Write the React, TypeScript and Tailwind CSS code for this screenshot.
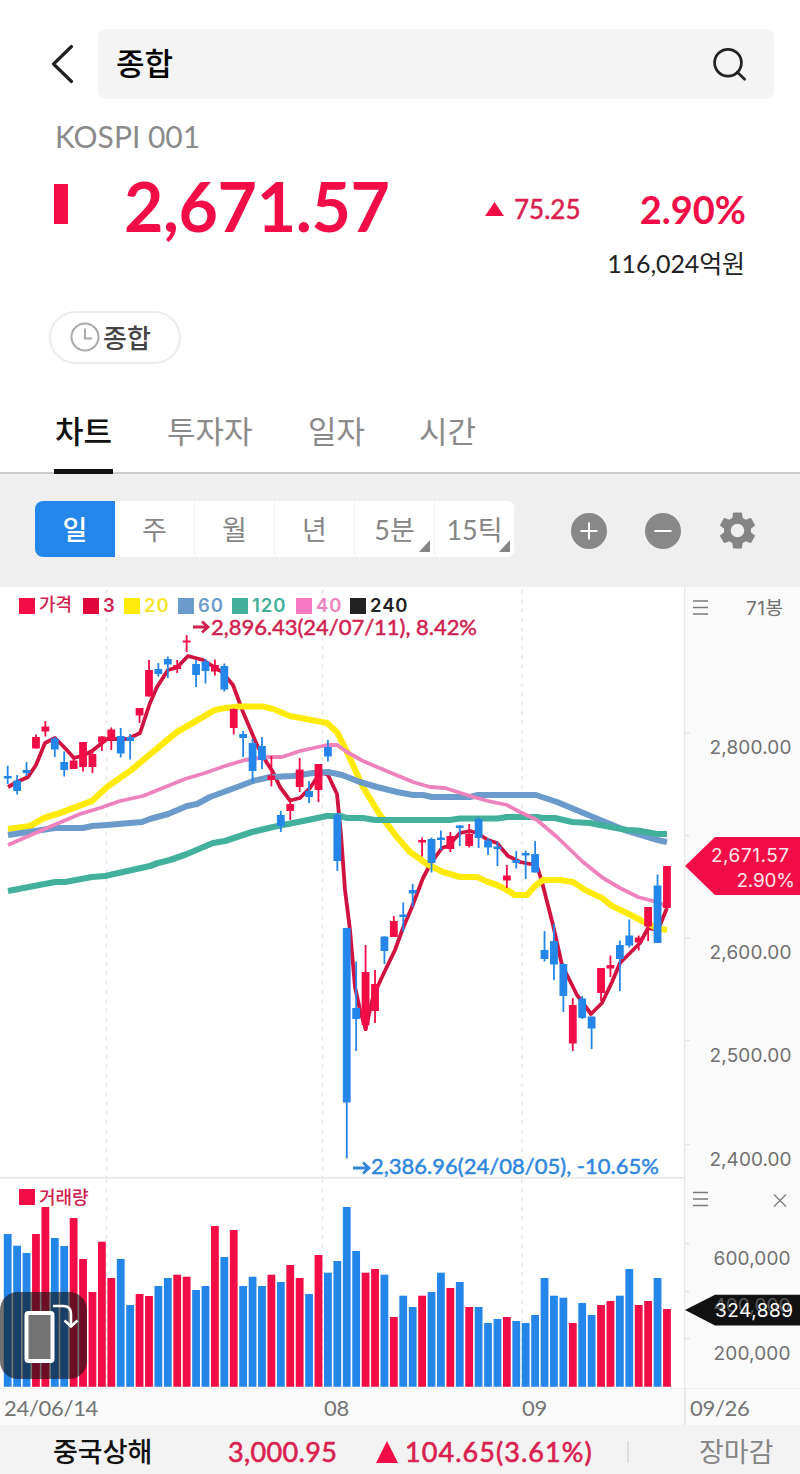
import React from 'react';
import { MdSettings } from 'react-icons/md';

const UP = '#f20d46';
const DOWN = '#2586ea';
const LATO = "Lato, 'Noto Sans CJK KR', sans-serif";
const INTER = "Inter, 'Noto Sans CJK KR', sans-serif";

// [direction, high, body top, body bottom, low, volume top]
type Bar = [number, number, number, number, number, number];

const bars: Bar[] = [
  [0, 765.7, 776, 778.5, 784, 1234],
  [0, 775, 780.5, 791, 794.5, 1245.7],
  [0, 762, 770, 773, 776, 1253],
  [1, 734.5, 737, 748.5, 748.5, 1234],
  [1, 721, 726.5, 731.5, 736.5, 1207],
  [0, 737, 738.5, 749.5, 757, 1238],
  [0, 751.5, 762, 770, 776.5, 1246],
  [1, 757, 760.5, 769, 769, 1218],
  [1, 742, 742, 767, 771.5, 1259],
  [1, 750, 754, 767, 773, 1292],
  [1, 736, 736.5, 742.5, 751, 1241.7],
  [1, 727.5, 729.5, 740, 750, 1278],
  [0, 728, 736, 753.5, 757.5, 1259],
  [0, 734, 737, 741, 759.5, 1305],
  [1, 708, 708, 715.5, 723, 1294],
  [1, 660, 670, 696.5, 696.5, 1296],
  [0, 663, 669, 674, 676.5, 1286],
  [0, 656.5, 659, 664.5, 678, 1278],
  [1, 660, 665, 669, 673, 1274.7],
  [1, 635, 640.5, 642.5, 652, 1276.7],
  [0, 660, 664, 675, 687, 1290],
  [0, 659, 661.5, 671, 683.5, 1286],
  [1, 659.5, 665, 671.5, 675.5, 1226],
  [0, 663.5, 666, 689.5, 691.5, 1257],
  [1, 708.5, 709, 728, 734.5, 1230],
  [0, 731, 734, 738, 757, 1286],
  [0, 739, 743, 771, 782, 1276.7],
  [0, 737, 746, 760, 769, 1286],
  [1, 756, 775.5, 780, 786.5, 1274.7],
  [0, 811, 815, 826, 832, 1282],
  [1, 801.5, 804, 811, 820, 1265],
  [1, 758, 769.5, 787, 792, 1278],
  [0, 781, 791, 797, 803, 1294],
  [1, 764, 764, 790, 802, 1255],
  [0, 740, 747, 756.5, 761.5, 1272.7],
  [0, 813, 815, 861, 871, 1261],
  [0, 928, 928, 1102.5, 1158.5, 1207],
  [0, 961.5, 1008, 1019, 1051, 1251],
  [1, 945, 972, 1025, 1031, 1272.7],
  [1, 970, 984, 1011, 1023, 1269],
  [0, 936.5, 936.5, 951, 964, 1274.7],
  [1, 916, 921, 937, 937, 1317],
  [0, 902.5, 914.5, 917, 931.5, 1295.7],
  [0, 884, 890, 893.5, 907, 1307],
  [1, 837.5, 840, 842.5, 856.5, 1295.7],
  [0, 837.5, 839, 863, 872.5, 1292],
  [0, 830.5, 837.5, 840, 850, 1272.7],
  [1, 832, 836, 849, 852, 1288],
  [0, 825, 825.5, 828, 846, 1282],
  [1, 824, 834, 846, 847.5, 1307],
  [0, 817.5, 819, 838, 848, 1307],
  [0, 838, 840.5, 847.5, 855, 1323],
  [0, 842, 846.5, 849, 866, 1319],
  [1, 865, 875.5, 880.5, 888, 1317],
  [0, 851, 860, 863, 868.5, 1321],
  [0, 850.5, 853, 855.5, 879, 1323],
  [0, 841, 854, 872.5, 872.5, 1315],
  [0, 931, 950, 959, 961.5, 1278],
  [0, 924, 941, 964.5, 980, 1295.7],
  [0, 963, 964, 996, 1012, 1297.7],
  [1, 998, 1005, 1043.5, 1051, 1323],
  [0, 996, 998.5, 1018, 1019, 1303],
  [0, 1016.5, 1016.5, 1028.5, 1049, 1315],
  [1, 968, 968, 993, 1001, 1305],
  [1, 955.5, 965, 968.5, 977, 1301],
  [0, 940.5, 945, 959, 991, 1295.7],
  [0, 919.5, 935.5, 945.5, 947.5, 1269],
  [1, 935.5, 937.5, 942.5, 950.5, 1305],
  [1, 907, 907, 926.5, 941, 1301],
  [0, 874.5, 885.5, 943, 943, 1278],
  [1, 866, 866, 908, 908, 1309],
];

const barX = (i: number) => 7.7 + i * 9.418;

const averages = [
  {
    color: '#cf1240',
    width: 3.8,
    points:
      '8,787 17,782 28,777 36,765 45,743 55,738 64,747 74,758 83,755.5 92,751 107,739 128,739 140,733 150,703 157,687 168,670 177,667.5 188,656 203,660 222,672 233,685 243,712 257,745 267,763 273,772 280,787 290,800.5 300,798 310,788 318,776 323,773 328,775 337,794 341,835 345,890 350,930 355,987 360,1010 365.6,1029 373,997 382,977 395,950 403,928 412,907 423,878 431,863 442,848 448,846 460,833 470,831 477,833 488,840 497,843 508,856 520,862 530,864 536,863 542,882 553,925 562,965 577,995 591,1014 602,1003 612,982 620,963 630,953 640,943 648,928 653,929 660,925 667,908',
  },
  {
    color: '#ffea0a',
    width: 6.2,
    points:
      '8,829 30,826 44,818 60,813 92,801 107,787 130,771 177,732 215,710 225,708 240,706.5 263,706.5 273,709 290,716 327,723 337,732 347,752 363,787 380,815 397,837 410,852 427,864 443,872 460,877 477,877 488,882 497,885 507,890 515,895 527,895 535,886 543,880 560,880 573,882 585,890 602,898 612,906 627,913 642,921 655,927 660,929 667,930',
  },
  {
    color: '#6b9bcb',
    width: 6,
    points:
      '8,835 35,831 55,828 83,828 92,826 107,825 130,823 142,822 150,819 168,814 187,806 197,804 210,797 240,786 253,781 270,777 293,776 313,773 328,772 342,775 360,782 377,787 397,792 413,795 423,795 432,797 470,797 478,795 536,795 557,802 593,817 627,831 657,840 667,842',
  },
  {
    color: '#42b09b',
    width: 6.2,
    points:
      '8,891 55,882 65,882 92,877 105,876 150,866 158,863 170,860 187,854 213,843 225,841 240,836 252,832 273,827 303,821 327,816 340,816 347,818 363,818 375,820 450,820 460,818.5 498,818.5 507,817 537,817 543,818 555,818 572,822 590,823 600,825 627,830 638,830.5 657,834 667,834',
  },
  {
    color: '#ee82bd',
    width: 3.8,
    points:
      '8,845 40,831 80,814 100,808 120,801 143,796 185,779 205,773 225,766 245,760 267,757 282,757 300,751 327,745 337,745 347,752 363,761 377,767 413,782 430,787 445,788 470,796 488,801 507,805 520,812 537,820 557,837 583,862 603,878 620,888 638,897 653,901 664,905',
  },
];

const legend = [
  { label: '가격', color: 'bg-[#f20d46]', text: 'text-[#d0214f]', width: 'w-[64px]' },
  { label: '3', color: 'bg-[#e0073c]', text: 'text-[#d0214f]', width: 'w-[41px]' },
  { label: '20', color: 'bg-[#ffea0a]', text: 'text-[#f5e32a]', width: 'w-[54px]' },
  { label: '60', color: 'bg-[#6b9bcb]', text: 'text-[#6b9bcb]', width: 'w-[54px]' },
  { label: '120', color: 'bg-[#42b09b]', text: 'text-[#42b09b]', width: 'w-[64px]' },
  { label: '40', color: 'bg-[#f779c2]', text: 'text-[#ee82bd]', width: 'w-[54px]' },
  { label: '240', color: 'bg-[#222222]', text: 'text-[#222222]', width: 'w-[64px]' },
];

const periods = [
  { label: '일' },
  { label: '주' },
  { label: '월' },
  { label: '년' },
  { label: '5분', more: true },
  { label: '15틱', more: true },
];

const GridLines = ({ top, bottom }: { top: number; bottom: number }) => (
  <g stroke="#e6e6e6" strokeWidth="1.5" strokeDasharray="4 5.3">
    {[106.5, 322.5, 521.8].map((x) => (
      <line key={x} x1={x} x2={x} y1={top} y2={bottom} />
    ))}
  </g>
);

const MenuLines = ({ y }: { y: number }) => (
  <path d={`M693 ${y - 6.5}h15M693 ${y}h15M693 ${y + 6.5}h15`} stroke="#7a7a7a" strokeWidth="1.5" />
);

const Header = () => (
  <header className="flex h-[99px] items-end pl-[50px]">
    <svg className="mb-[14px] h-[42px] w-[26px]" viewBox="0 0 26 42" fill="none">
      <path d="M21.5 3.5 3.5 21 21.5 38.5" stroke="#222" strokeWidth="3.2" strokeLinecap="round" strokeLinejoin="round" />
    </svg>
    <div className="ml-[22px] flex h-[70px] w-[676px] items-center justify-between rounded-lg bg-[#f4f4f4] pr-[26px] pb-[1px] pl-[18px]">
      <span className="text-[31px] leading-none font-medium text-black">종합</span>
      <svg className="mt-[3px] h-[36px] w-[36px]" viewBox="0 0 36 36" fill="none" stroke="#222" strokeWidth="2.7">
        <circle cx="16" cy="15.8" r="13.4" />
        <path d="m25.4 25.3 7.2 7" strokeLinecap="round" />
      </svg>
    </div>
  </header>
);

const Quote = () => (
  <section className="h-[212px] pl-[54px]">
    <p className="pt-[19px] pl-px text-[30px] leading-[36px] text-[#8a8a8a]">KOSPI 001</p>
    <div className="mt-[18px] flex h-[74px] items-center text-[#f20d46]">
      <span className="mb-[10px] h-[40px] w-[14px] bg-[#f20d46]" />
      <span className="mb-[6px] ml-[56px] w-[264px] text-[68px] leading-[74px] font-bold tracking-[-0.4px]">2,671.57</span>
      <svg className="ml-[97px] h-[14px] w-[19px]" viewBox="0 0 19 14">
        <path d="M9.5 0 19 14H0z" fill={UP} />
      </svg>
      <span className="ml-[10px] w-[66px] pt-px text-[26px] text-[#d9204f] [-webkit-text-stroke:0.5px_#d9204f]">
        75.25
      </span>
      <span className="w-[166px] text-right text-[38px] font-bold">2.90%</span>
    </div>
    <p className="w-[691px] text-right text-[25px] leading-[34px] tracking-[-0.1px] text-[#222]">116,024억원</p>
  </section>
);

const Tabs = () => (
  <nav className="flex h-[110px] border-b-2 border-[#ccc] pl-[54px] text-[31px] text-[#8a8a8a]">
    <span className="-mb-[2px] flex h-[110px] w-[59px] justify-center border-b-5 border-[#111] pt-[44px] leading-[46px] font-medium text-[#111]">
      차트
    </span>
    <span className="ml-[54px] w-[88px] pt-[44px] leading-[46px]">투자자</span>
    <span className="ml-[53px] w-[58px] pt-[44px] leading-[46px]">일자</span>
    <span className="ml-[53px] w-[60px] pt-[44px] leading-[46px]">시간</span>
  </nav>
);

const Toolbar = () => (
  <div className="flex h-[113px] items-center bg-[#efefef] pl-[35px]">
    <div className="mb-[3px] flex h-[56px] w-[480px] overflow-hidden rounded-lg bg-white">
      {periods.map((p, i) => (
        <span
          key={p.label}
          className={`relative flex w-[80px] items-center justify-center text-[27px] leading-none ${
            i === 0 ? 'bg-[#2586ea] font-medium text-white' : 'border-r border-[#f2f2f2] text-[#858585]'
          }`}
        >
          {p.label}
          {p.more && (
            <svg className="absolute right-[4px] bottom-[5px] h-[12px] w-[11px]" viewBox="0 0 11 12">
              <path d="M11 0v12H0z" fill="#858585" />
            </svg>
          )}
        </span>
      ))}
    </div>
    <svg className="ml-[56px] h-[36px] w-[36px]" viewBox="0 0 36 36">
      <circle cx="18" cy="18" r="18" fill="#888" />
      <path d="M9.5 18h17M18 9.5v17" stroke="#fff" strokeWidth="2" />
    </svg>
    <svg className="ml-[38px] h-[36px] w-[36px]" viewBox="0 0 36 36">
      <circle cx="18" cy="18" r="18" fill="#888" />
      <path d="M9.5 18h17" stroke="#fff" strokeWidth="2" />
    </svg>
    <MdSettings size={45} color="#858585" className="ml-[34px]" />
  </div>
);

const PricePane = () => (
  <div className="relative flex h-[590px]">
    <svg className="relative z-10 h-[590px] w-[684px] overflow-visible" viewBox="0 587 684 590">
      <GridLines top={590} bottom={1177} />
      {averages.map((line) => (
        <polyline
          key={line.color}
          points={line.points}
          fill="none"
          stroke={line.color}
          strokeWidth={line.width}
          strokeLinejoin="round"
        />
      ))}
      {bars.map(([up, high, top, bottom, low], i) => (
        <g key={i} fill={up ? UP : DOWN}>
          <rect x={barX(i) - 0.9} y={high} width="1.8" height={low - high} />
          <rect x={barX(i) - 3.9} y={top} width="7.8" height={bottom - top} />
        </g>
      ))}
      <path d="M361.7 1020h7.8l-2.6 11h-2.6z" fill={UP} />
      <path d="M193 627h14M202 621.5l6 5.5-6 5.5" fill="none" stroke="#d0214f" strokeWidth="2.8" />
      <path d="M353 1168h15M363 1162.5l6 5.5-6 5.5" fill="none" stroke="#2f86dc" strokeWidth="2.8" />
      <g fontFamily={LATO} fontSize="22" strokeWidth="0.5">
        <text x="211" y="635" fill="#d0214f" stroke="#d0214f" textLength="266">2,896.43(24/07/11), 8.42%</text>
        <text x="371" y="1174" fill="#2f86dc" stroke="#2f86dc" textLength="288">2,386.96(24/08/05), -10.65%</text>
      </g>
    </svg>
    <svg className="h-[590px] w-[116px] bg-[#fafafa]" viewBox="684 587 116 590">
      <path d="M684.5 587v590" stroke="#e8e8e8" strokeWidth="1.5" />
      <path d="M685 733h5M685 835.5h5M685 938h5M685 1040.5h5M685 1144.5h5" stroke="#e4e4e4" strokeWidth="1.5" />
      <MenuLines y={607.5} />
      <g fontFamily={INTER} fontSize="19" fill="#707070">
        <text x="746" y="614.5" textLength="37">71봉</text>
        <text x="709.5" y="754" textLength="82">2,800.00</text>
        <text x="709.5" y="959" textLength="82">2,600.00</text>
        <text x="709.5" y="1061.5" textLength="82">2,500.00</text>
        <text x="709.5" y="1166" textLength="82">2,400.00</text>
      </g>
      <path d="M685 866 715 837H800V895H715z" fill={UP} />
      <g fontFamily={INTER} fontSize="19" fill="#ffe6ec">
        <text x="711" y="861.5" textLength="78">2,671.57</text>
        <text x="736.5" y="887" textLength="58.5">2.90%</text>
      </g>
    </svg>
    <div className="absolute top-[8px] left-[19px] z-10 flex font-[Inter,'Noto_Sans_CJK_KR',sans-serif] text-[18.5px] leading-[20px] font-semibold">
      {legend.map((item) => (
        <span key={item.label} className={`flex items-center gap-[4px] ${item.width}`}>
          <span className={`mt-px h-[16px] w-[16px] shrink-0 ${item.color}`} />
          <span
            className={`h-[20px] ${item.text} ${item.label === '가격' ? 'text-[18px] font-medium' : 'tracking-[0.9px]'}`}
          >
            {item.label}
          </span>
        </span>
      ))}
    </div>
  </div>
);

const VolumePane = () => (
  <div className="relative flex h-[211px]">
    <svg className="h-[211px] w-[684px]" viewBox="0 1177 684 211">
      <path d="M0 1177.8h684" stroke="#e6e6e6" strokeWidth="1.6" />
      <GridLines top={1179} bottom={1388} />
      {bars.map(([up, , , , , top], i) => (
        <rect key={i} x={barX(i) - 3.9} y={top} width="7.8" height={1386.8 - top} fill={up ? UP : DOWN} />
      ))}
    </svg>
    <svg className="h-[211px] w-[116px] bg-[#fafafa]" viewBox="684 1177 116 211">
      <path d="M684.5 1177v211" stroke="#e8e8e8" strokeWidth="1.5" />
      <path d="M685 1243.5h5M685 1291.5h5M685 1338.5h5" stroke="#e4e4e4" strokeWidth="1.5" />
      <MenuLines y={1199} />
      <path d="m774 1194.5 12 12m0-12-12 12" stroke="#858585" strokeWidth="1.5" />
      <path d="M685 1310 715 1294.7H800V1325.5H715z" fill="#111" />
      <g fontFamily={INTER} fontSize="19" fill="#707070">
        <text x="713.5" y="1264.5" textLength="77">600,000</text>
        <text x="713.5" y="1312" textLength="77" fill="#555">400,000</text>
        <text x="713.5" y="1359.5" textLength="77">200,000</text>
        <text x="715" y="1317" textLength="78" fill="#fff">324,889</text>
      </g>
    </svg>
    <div className="absolute top-[8px] left-[19px] flex items-center gap-[4px]">
      <span className="h-[16px] w-[16px] bg-[#f20d46]" />
      <span className="text-[18px] leading-[24px] font-medium text-[#d0214f]">거래량</span>
    </div>
    <svg className="absolute top-[115px] left-0 h-[87px] w-[87px]" viewBox="0 0 87 87" fill="none">
      <rect width="87" height="87" rx="18" fill="#111" fillOpacity="0.6" />
      <rect x="26.5" y="21" width="26" height="48" rx="2" fill="#737373" stroke="#fff" strokeWidth="4" />
      <path d="M53 14h10q8 0 8 8v11M64.5 28.5l6.5 6 6.5-6" stroke="#fff" strokeWidth="2.6" />
    </svg>
  </div>
);

const DateAxis = () => (
  <div className="flex h-[37px] border-t border-[#eee] bg-[#fafafa] text-[22px] leading-[38px] tracking-[-0.3px] text-[#747474]">
    <span className="w-[320px] pl-[4px]">24/06/14</span>
    <span className="w-[198px] pl-[4px]">08</span>
    <span className="w-[166px] pl-[4px]">09</span>
    <span className="w-[116px] border-l-2 border-[#e8e8e8] pl-[4px]">09/26</span>
  </div>
);

const Ticker = () => (
  <footer className="flex h-[49px] items-center bg-[#f3f3f3] pt-[5px] pl-[53px] text-[27px] whitespace-nowrap">
    <span className="w-[175px] font-medium text-[#111]">중국상해</span>
    <span className="w-[148px] tracking-[0.35px] text-[#d9204f] [-webkit-text-stroke:0.6px_#d9204f]">3,000.95</span>
    <svg className="h-[22px] w-[22px]" viewBox="0 0 22 22">
      <path d="M11 0 22 22H0z" fill={UP} />
    </svg>
    <span className="ml-[7px] w-[222px] tracking-[1.05px] text-[#d9204f] [-webkit-text-stroke:0.6px_#d9204f]">
      104.65(3.61%)
    </span>
    <span className="h-[22px] w-[2px] bg-[#ddd]" />
    <span className="ml-[70px] text-[#858585]">장마감</span>
  </footer>
);

export default function App() {
  return (
    <div className="h-[1474px] w-[800px] overflow-hidden bg-white font-[Lato,'Noto_Sans_CJK_KR',sans-serif]">
      <Header />
      <Quote />
      <div className="h-[53px] pl-[49px]">
        <button className="flex h-[53px] w-[132px] items-center gap-[3px] rounded-full border-2 border-[#ececec] pl-[19px] text-[26px] leading-none font-medium text-[#444]">
          <svg className="mb-px h-[30px] w-[30px]" viewBox="0 0 30 30" fill="none" stroke="#aaa" strokeWidth="2">
            <circle cx="15" cy="15" r="13.5" />
            <path d="M15 6.5v10h7" />
          </svg>
          종합
        </button>
      </div>
      <Tabs />
      <Toolbar />
      <PricePane />
      <VolumePane />
      <DateAxis />
      <Ticker />
    </div>
  );
}
